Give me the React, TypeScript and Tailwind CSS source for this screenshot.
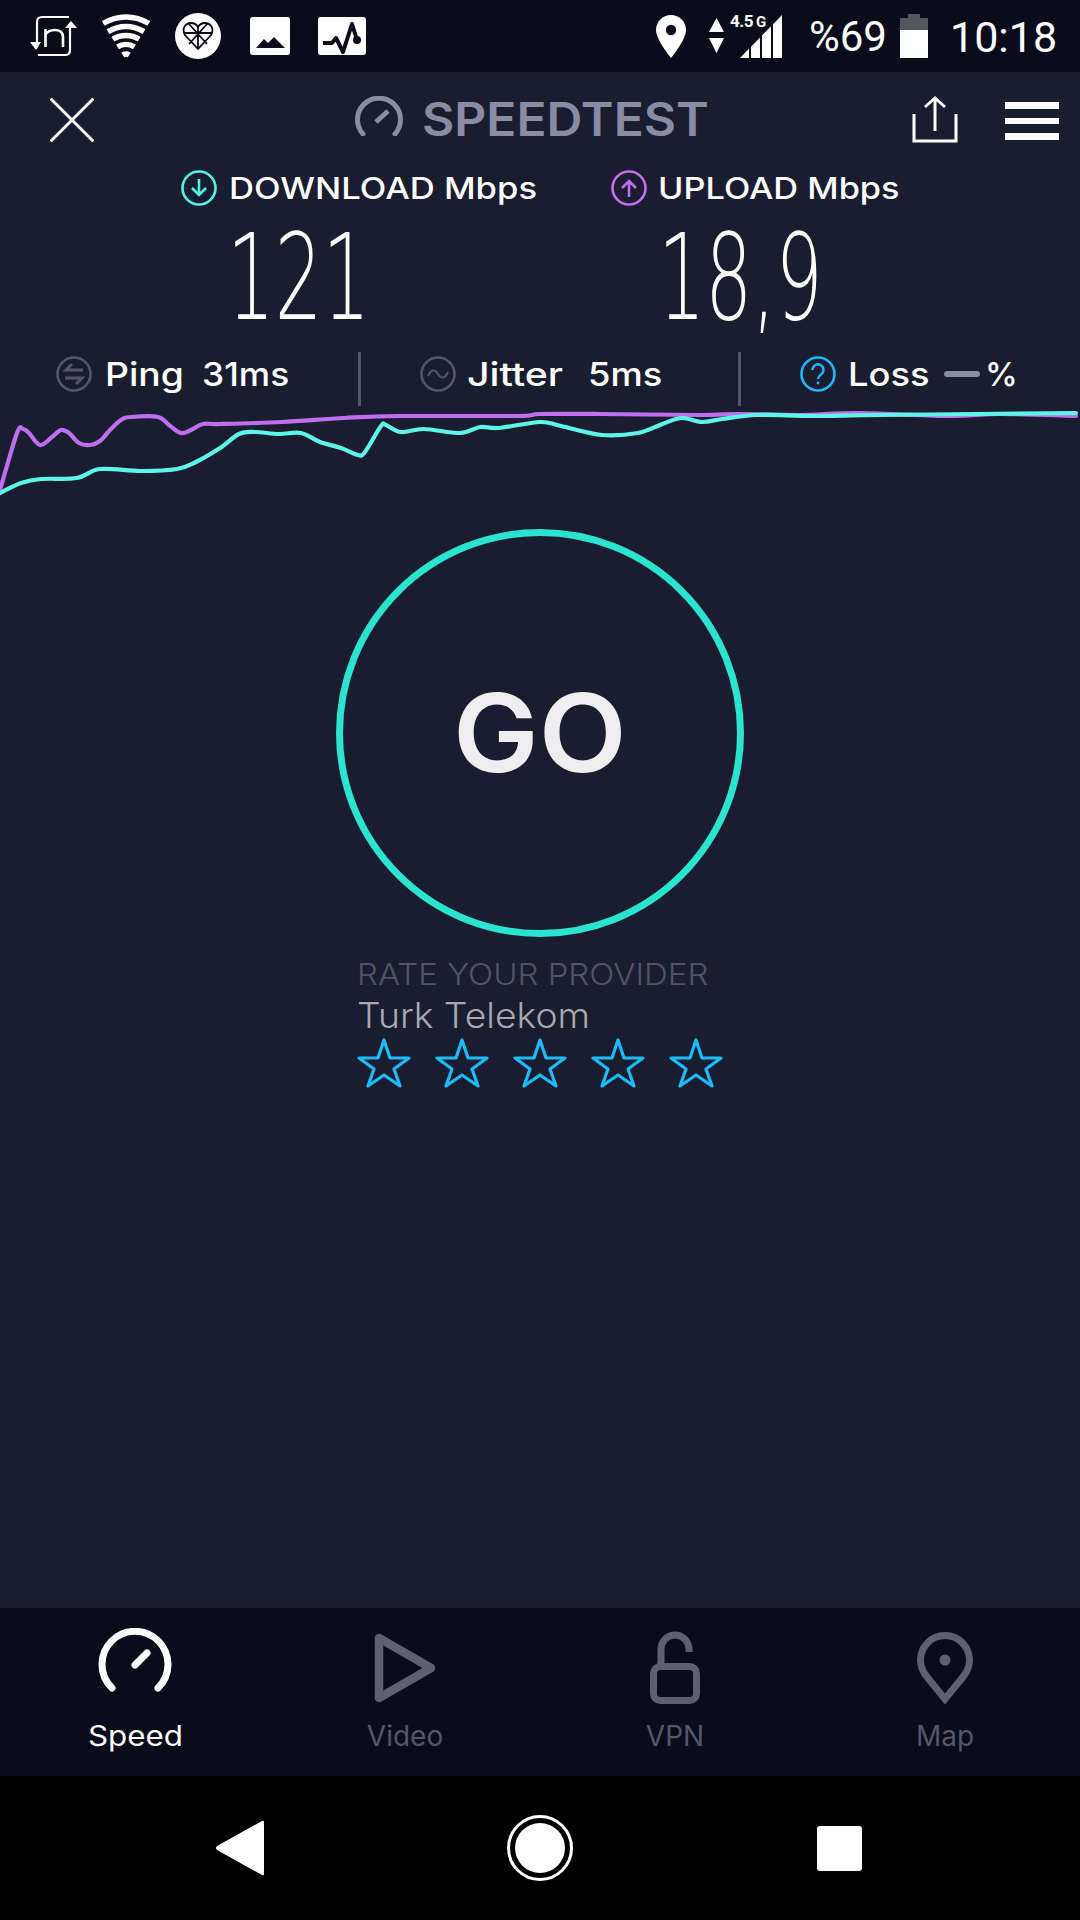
const purple: [number, number][] = [
  [0, 490], [17, 433], [23, 429], [29, 433], [40, 445], [52, 437], [61, 430], [69, 433], [79, 443], [90, 445],
  [100, 441], [110, 430], [121, 420], [131, 417], [158, 417], [169, 425], [181, 433], [191, 430], [203, 424],
  [220, 424], [282, 422], [344, 418], [399, 416], [517, 416], [540, 414], [600, 414], [700, 415], [740, 414],
  [800, 415], [860, 413], [950, 416], [1000, 414], [1076, 416],
]

const cyan: [number, number][] = [
  [0, 493], [21, 483], [41, 479], [77, 478], [100, 469], [141, 471], [177, 469], [196, 462], [220, 448],
  [239, 434], [255, 432], [279, 434], [301, 433], [320, 442], [341, 448], [358, 455], [365, 452], [381, 426],
  [386, 425], [401, 432], [424, 429], [460, 433], [480, 427], [499, 428], [540, 422], [561, 426], [602, 435],
  [638, 433], [660, 425], [681, 418], [702, 422], [722, 419], [757, 415], [815, 416], [884, 415], [1076, 413],
]

// catmull-rom through the traced points, so the lines don't look faceted
function smooth(pts: [number, number][]) {
  let d = `M${pts[0][0]} ${pts[0][1]}`
  for (let i = 0; i < pts.length - 1; i++) {
    const a = pts[i - 1] ?? pts[i]
    const b = pts[i]
    const c = pts[i + 1]
    const e = pts[i + 2] ?? c
    d += ` C${b[0] + (c[0] - a[0]) / 6} ${b[1] + (c[1] - a[1]) / 6} ${c[0] - (e[0] - b[0]) / 6} ${c[1] - (e[1] - b[1]) / 6} ${c[0]} ${c[1]}`
  }
  return d
}

function StatusBar() {
  return (
    <div className="flex h-[72px] shrink-0 items-start bg-[#0a0c1c] font-['Roboto',sans-serif] text-white">
      <svg className="ml-[30px] mt-[15px]" width="48" height="42" viewBox="0 0 48 42" fill="none" stroke="#fff" strokeWidth="2.2">
        <path d="M39 2H12Q7 2 7 7V27" />
        <path d="M40 13V35Q40 40 35 40H8" />
        <path d="M15.5 32V14M15.5 20C17 14 33 12 33 22V32" strokeWidth="2.6" />
        <path d="M0 27H11L6 35Z M35 13H47L41 6Z" fill="#fff" stroke="none" />
      </svg>
      <svg className="ml-[24px] mt-[12px]" width="48" height="46" viewBox="0 0 48 46" fill="none" stroke="#fff" strokeWidth="5.4">
        <path d="M1.2 11.5A43 43 0 0 1 46.8 11.5" />
        <path d="M6 19.6A34 34 0 0 1 42 19.6" />
        <path d="M10.8 27.3A25 25 0 0 1 37.2 27.3" />
        <path d="M15.5 34.9A16 16 0 0 1 32.5 34.9" />
        <path d="M20.8 43A6 6 0 0 1 27.2 43" />
      </svg>
      <svg className="ml-[25px] mt-[13px]" width="46" height="46" viewBox="0 0 46 46">
        <circle cx="23" cy="23" r="23" fill="#fff" />
        <path
          d="M23 36L10 22C6 15 11 10 16 10C19 10 21.5 11.5 23 14C24.5 11.5 27 10 30 10C35 10 40 15 36 22ZM23 14V36M9 20H37M14 11L32 31M32 11L14 31"
          fill="none"
          stroke="#0a0c1c"
          strokeWidth="1.8"
        />
      </svg>
      <svg className="ml-[29px] mt-[17px]" width="40" height="38" viewBox="0 0 40 38">
        <rect width="40" height="38" rx="3" fill="#fff" />
        <path d="M6 31L14 22L18 26L24 20L35 31Z" fill="#0a0c1c" />
      </svg>
      <svg className="ml-[28px] mt-[17px]" width="48" height="38" viewBox="0 0 48 38">
        <rect width="48" height="38" rx="3" fill="#fff" />
        <path d="M5 26H14L18 21L25 35L34 7L39 23" fill="none" stroke="#0a0c1c" strokeWidth="4" strokeLinejoin="round" />
        <circle cx="39" cy="23" r="4" fill="#0a0c1c" />
      </svg>
      <svg className="ml-[290px] mt-[15px]" width="30" height="43" viewBox="0 0 30 43">
        <path d="M15 0C6.7 0 0 6.7 0 15C0 25 15 43 15 43C15 43 30 25 30 15C30 6.7 23.3 0 15 0Z" fill="#fff" />
        <circle cx="15" cy="15" r="5.2" fill="#0a0c1c" />
      </svg>
      <svg className="ml-[23px] mt-[18px]" width="15" height="35" viewBox="0 0 15 35" fill="#fff">
        <path d="M7.5 0L15 14H0Z M0 20H15L7.5 35Z" />
      </svg>
      <div className="relative ml-[16px] mt-[15px] h-[43px] w-[42px]">
        <svg width="42" height="43" viewBox="0 0 42 43" fill="#fff">
          <path d="M0 43L9 33.8V43Z M11 31.7L20 22.5V43H11Z M22 20.5L31 11.3V43H22Z M33 9.2L42 0V43H33Z" />
        </svg>
        <span className="absolute left-[-10px] top-[-4px] text-[17px] font-bold leading-[20px] tracking-[-0.5px]">
          4.5<span className="ml-[3px] text-[15px]">G</span>
        </span>
      </div>
      <span className="ml-[27px] mt-[12px] text-[42px] leading-[50px]">%69</span>
      <div className="ml-[13px] mt-[14px] flex w-[28px] flex-col items-center">
        <div className="h-[4px] w-[12px] bg-[#55555f]" />
        <div className="h-[12px] w-[28px] bg-[#55555f]" />
        <div className="h-[28px] w-[28px] bg-white" />
      </div>
      <span className="ml-[22px] mt-[12px] text-[43px] leading-[50px]">10:18</span>
    </div>
  )
}

function Header() {
  return (
    <div className="flex h-[88px] shrink-0 items-start">
      <svg className="ml-[50px] mt-[26px]" width="44" height="44" viewBox="0 0 44 44" stroke="#fff" strokeWidth="3" strokeLinecap="round">
        <path d="M1.5 1.5L42.5 42.5M42.5 1.5L1.5 42.5" />
      </svg>
      <svg className="ml-[261px] mt-[24px]" width="48" height="40" viewBox="0 0 48 40" fill="none" stroke="#8a8ca3" strokeWidth="5" strokeLinecap="round">
        <path d="M8 38A21.5 21.5 0 1 1 40 38" />
        <path d="M21 26L33 15" strokeLinecap="butt" />
      </svg>
      <span className="ml-[19px] mt-[19px] inline-block w-[264px] origin-left scale-x-[1.08] whitespace-nowrap text-[46px] font-semibold leading-[56px] text-[#8a8ca3]">
        SPEEDTEST
      </span>
      <div className="ml-auto flex">
        <svg className="mt-[24px]" width="46" height="48" viewBox="0 0 46 48" fill="none" stroke="#fff" strokeWidth="3">
          <path d="M2 18V45H44V18" />
          <path d="M23 2V35M13 11L23 2L33 11" />
        </svg>
        <div className="ml-[47px] mr-[21px] mt-[30px] flex flex-col gap-[9px]">
          <div className="h-[6.5px] w-[54px] bg-white" />
          <div className="h-[6.5px] w-[54px] bg-white" />
          <div className="h-[6.5px] w-[54px] bg-white" />
        </div>
      </div>
    </div>
  )
}

function Results() {
  return (
    <div className="shrink-0 text-white">
      <div className="mt-[10px] flex h-[36px] items-center pl-[181px] text-[30px] font-medium leading-[36px]">
        <div className="flex w-[430px] items-center gap-[12px]">
          <svg width="36" height="36" viewBox="0 0 36 36" fill="none" stroke="#4ef5e6" strokeWidth="2.6">
            <circle cx="18" cy="18" r="16.5" />
            <path d="M18 9V25M11 18L18 25L25 18" />
          </svg>
          <span className="inline-block origin-left scale-x-[1.155] whitespace-nowrap">DOWNLOAD Mbps</span>
        </div>
        <div className="flex items-center gap-[11px]">
          <svg width="36" height="36" viewBox="0 0 36 36" fill="none" stroke="#c56cf0" strokeWidth="2.6">
            <circle cx="18" cy="18" r="16.5" />
            <path d="M18 27V11M11 18L18 11L25 18" />
          </svg>
          <span className="inline-block origin-left scale-x-[1.145] whitespace-nowrap">UPLOAD Mbps</span>
        </div>
      </div>

      <div className="mt-[12px] flex h-[120px] font-['DejaVu_Sans',sans-serif] text-[119px] font-extralight leading-[120px]">
        <div className="w-[598px] text-center">
          <span className="inline-block origin-center scale-x-[0.63]">121</span>
        </div>
        <div className="w-[284px] text-center">
          <span className="inline-block origin-center scale-x-[0.62] whitespace-nowrap">18,9</span>
        </div>
      </div>

      <div className="mt-[14px] flex h-[54px] items-start pl-[56px] text-[33px] font-medium leading-[44px]">
        <div className="flex h-[44px] w-[302px] items-center">
          <svg width="36" height="36" viewBox="0 0 36 36" fill="none" stroke="#55566a" strokeWidth="2.6">
            <circle cx="18" cy="18" r="16.5" />
            <path d="M27 14H10L16 8M9 22H26L20 28" strokeWidth="3" />
          </svg>
          <span className="ml-[13px] inline-block w-[97px] origin-left scale-x-[1.13]">Ping</span>
          <span className="inline-block origin-left scale-x-[1.07]">31ms</span>
        </div>
        <div className="h-[54px] w-[3px] bg-[#55566a]" />
        <div className="ml-[59px] flex h-[44px] w-[318px] items-center">
          <svg width="36" height="36" viewBox="0 0 36 36" fill="none" stroke="#55566a" strokeWidth="2.6">
            <circle cx="18" cy="18" r="16.5" />
            <path d="M8 20C11 13 15 13 18 18C21 23 25 23 28 16" strokeWidth="2" />
          </svg>
          <span className="ml-[11px] inline-block w-[121px] origin-left scale-x-[1.19]">Jitter</span>
          <span className="inline-block origin-left scale-x-[1.1]">5ms</span>
        </div>
        <div className="h-[54px] w-[3px] bg-[#55566a]" />
        <div className="ml-[59px] flex h-[44px] items-center">
          <svg width="36" height="36" viewBox="0 0 36 36" fill="none" stroke="#1cb8f8" strokeWidth="2.6">
            <circle cx="18" cy="18" r="16.5" />
            <path d="M12.5 14A5.5 5.5 0 1 1 21 18.5C19 20 18 21 18 23" strokeWidth="2.4" />
            <circle cx="18" cy="27" r="1.4" fill="#1cb8f8" stroke="none" />
          </svg>
          <span className="ml-[12px] inline-block w-[96px] origin-left scale-x-[1.1]">Loss</span>
          <div className="h-[6px] w-[36px] rounded-full bg-[#8a8ca3]" />
          <span className="ml-[5px]">%</span>
        </div>
      </div>
    </div>
  )
}

function Star() {
  return (
    <svg width="54" height="50" viewBox="0 0 54 50" fill="none" stroke="#1cbcfb" strokeWidth="3.2" strokeLinejoin="round">
      <path d="M27 2L33 20H52L37 31L43 48L27 37L11 48L17 31L2 20H21Z" />
    </svg>
  )
}

function BottomTabs() {
  const grey = '#5e5f72'
  return (
    <div className="grid h-[168px] shrink-0 grid-cols-4 bg-[#0a0c1c] text-[28px] leading-[38px]">
      <div className="flex flex-col items-center pt-[20px] text-white">
        <svg width="90" height="84" viewBox="0 0 90 84" fill="none" stroke="#fff" strokeWidth="7" strokeLinecap="round">
          <path d="M22 60A33 33 0 1 1 68 60" />
          <path d="M45 37L57 25" />
        </svg>
        <span className="mt-[5px] inline-block scale-x-[1.12]">Speed</span>
      </div>
      <div className="flex flex-col items-center pt-[20px] text-[#55566a]">
        <svg width="90" height="84" viewBox="0 0 90 84" fill="none" stroke={grey} strokeWidth="8.5" strokeLinejoin="round">
          <path d="M19 10L71 40L19 70Z" />
        </svg>
        <span className="mt-[5px]">Video</span>
      </div>
      <div className="flex flex-col items-center pt-[20px] text-[#55566a]">
        <svg width="90" height="84" viewBox="0 0 90 84" fill="none" stroke={grey} strokeWidth="7">
          <rect x="23.5" y="38.5" width="43" height="34" rx="7" />
          <path d="M31 39V21A14 14 0 0 1 59 21V24" />
        </svg>
        <span className="mt-[5px]">VPN</span>
      </div>
      <div className="flex flex-col items-center pt-[20px] text-[#55566a]">
        <svg width="90" height="84" viewBox="0 0 90 84" fill="none" stroke={grey} strokeWidth="7">
          <path d="M45 71L27 49C23 44 20.5 39 20.5 32A24.5 24.5 0 0 1 69.5 32C69.5 39 67 44 63 49Z" />
          <circle cx="45" cy="32" r="5.5" fill={grey} stroke="none" />
        </svg>
        <span className="mt-[5px]">Map</span>
      </div>
    </div>
  )
}

function NavBar() {
  return (
    <div className="flex h-[144px] shrink-0 items-center bg-black pl-[216px]">
      <svg width="48" height="56" viewBox="0 0 48 56" fill="#fff">
        <path d="M48 2V54Q48 56 46 55L1 30Q-1 28 1 26L46 1Q48 0 48 2Z" />
      </svg>
      <svg className="ml-[243px]" width="66" height="66" viewBox="0 0 66 66">
        <circle cx="33" cy="33" r="31.5" fill="none" stroke="#fff" strokeWidth="3" />
        <circle cx="33" cy="33" r="25" fill="#fff" />
      </svg>
      <div className="ml-[244px] h-[45px] w-[45px] rounded-[3px] bg-white" />
    </div>
  )
}

export default function App() {
  return (
    <div className="flex h-[1920px] w-[1080px] flex-col overflow-hidden bg-[#1a1c2f] font-['Inter',sans-serif]">
      <StatusBar />
      <Header />
      <Results />

      <svg className="block shrink-0" width="1080" height="100" viewBox="0 406 1080 100" fill="none" strokeWidth="4.2" strokeLinecap="round">
        <path d={smooth(purple)} stroke="#c06ef0" />
        <path d={smooth(cyan)} stroke="#5cf5e8" />
      </svg>

      <div className="mx-auto mt-[23px] flex h-[408px] w-[408px] shrink-0 items-center justify-center rounded-full border-[7px] border-[#2ae4d0]">
        <span className="inline-block scale-x-[1.06] text-[108px] font-semibold leading-none text-[#eeeef0]">GO</span>
      </div>

      <div className="mt-[22px] shrink-0 pl-[357px]">
        <p className="origin-left scale-x-[1.1] whitespace-nowrap text-[30px] font-light leading-[30px] text-[#52536a]">RATE YOUR PROVIDER</p>
        <p className="mt-[8px] origin-left scale-x-[1.065] whitespace-nowrap text-[35px] font-light leading-[36px] text-[#a8a8b0]">Turk Telekom</p>
        <div className="mt-[5px] flex gap-[24px]">
          <Star />
          <Star />
          <Star />
          <Star />
          <Star />
        </div>
      </div>

      <div className="flex-1" />
      <BottomTabs />
      <NavBar />
    </div>
  )
}
